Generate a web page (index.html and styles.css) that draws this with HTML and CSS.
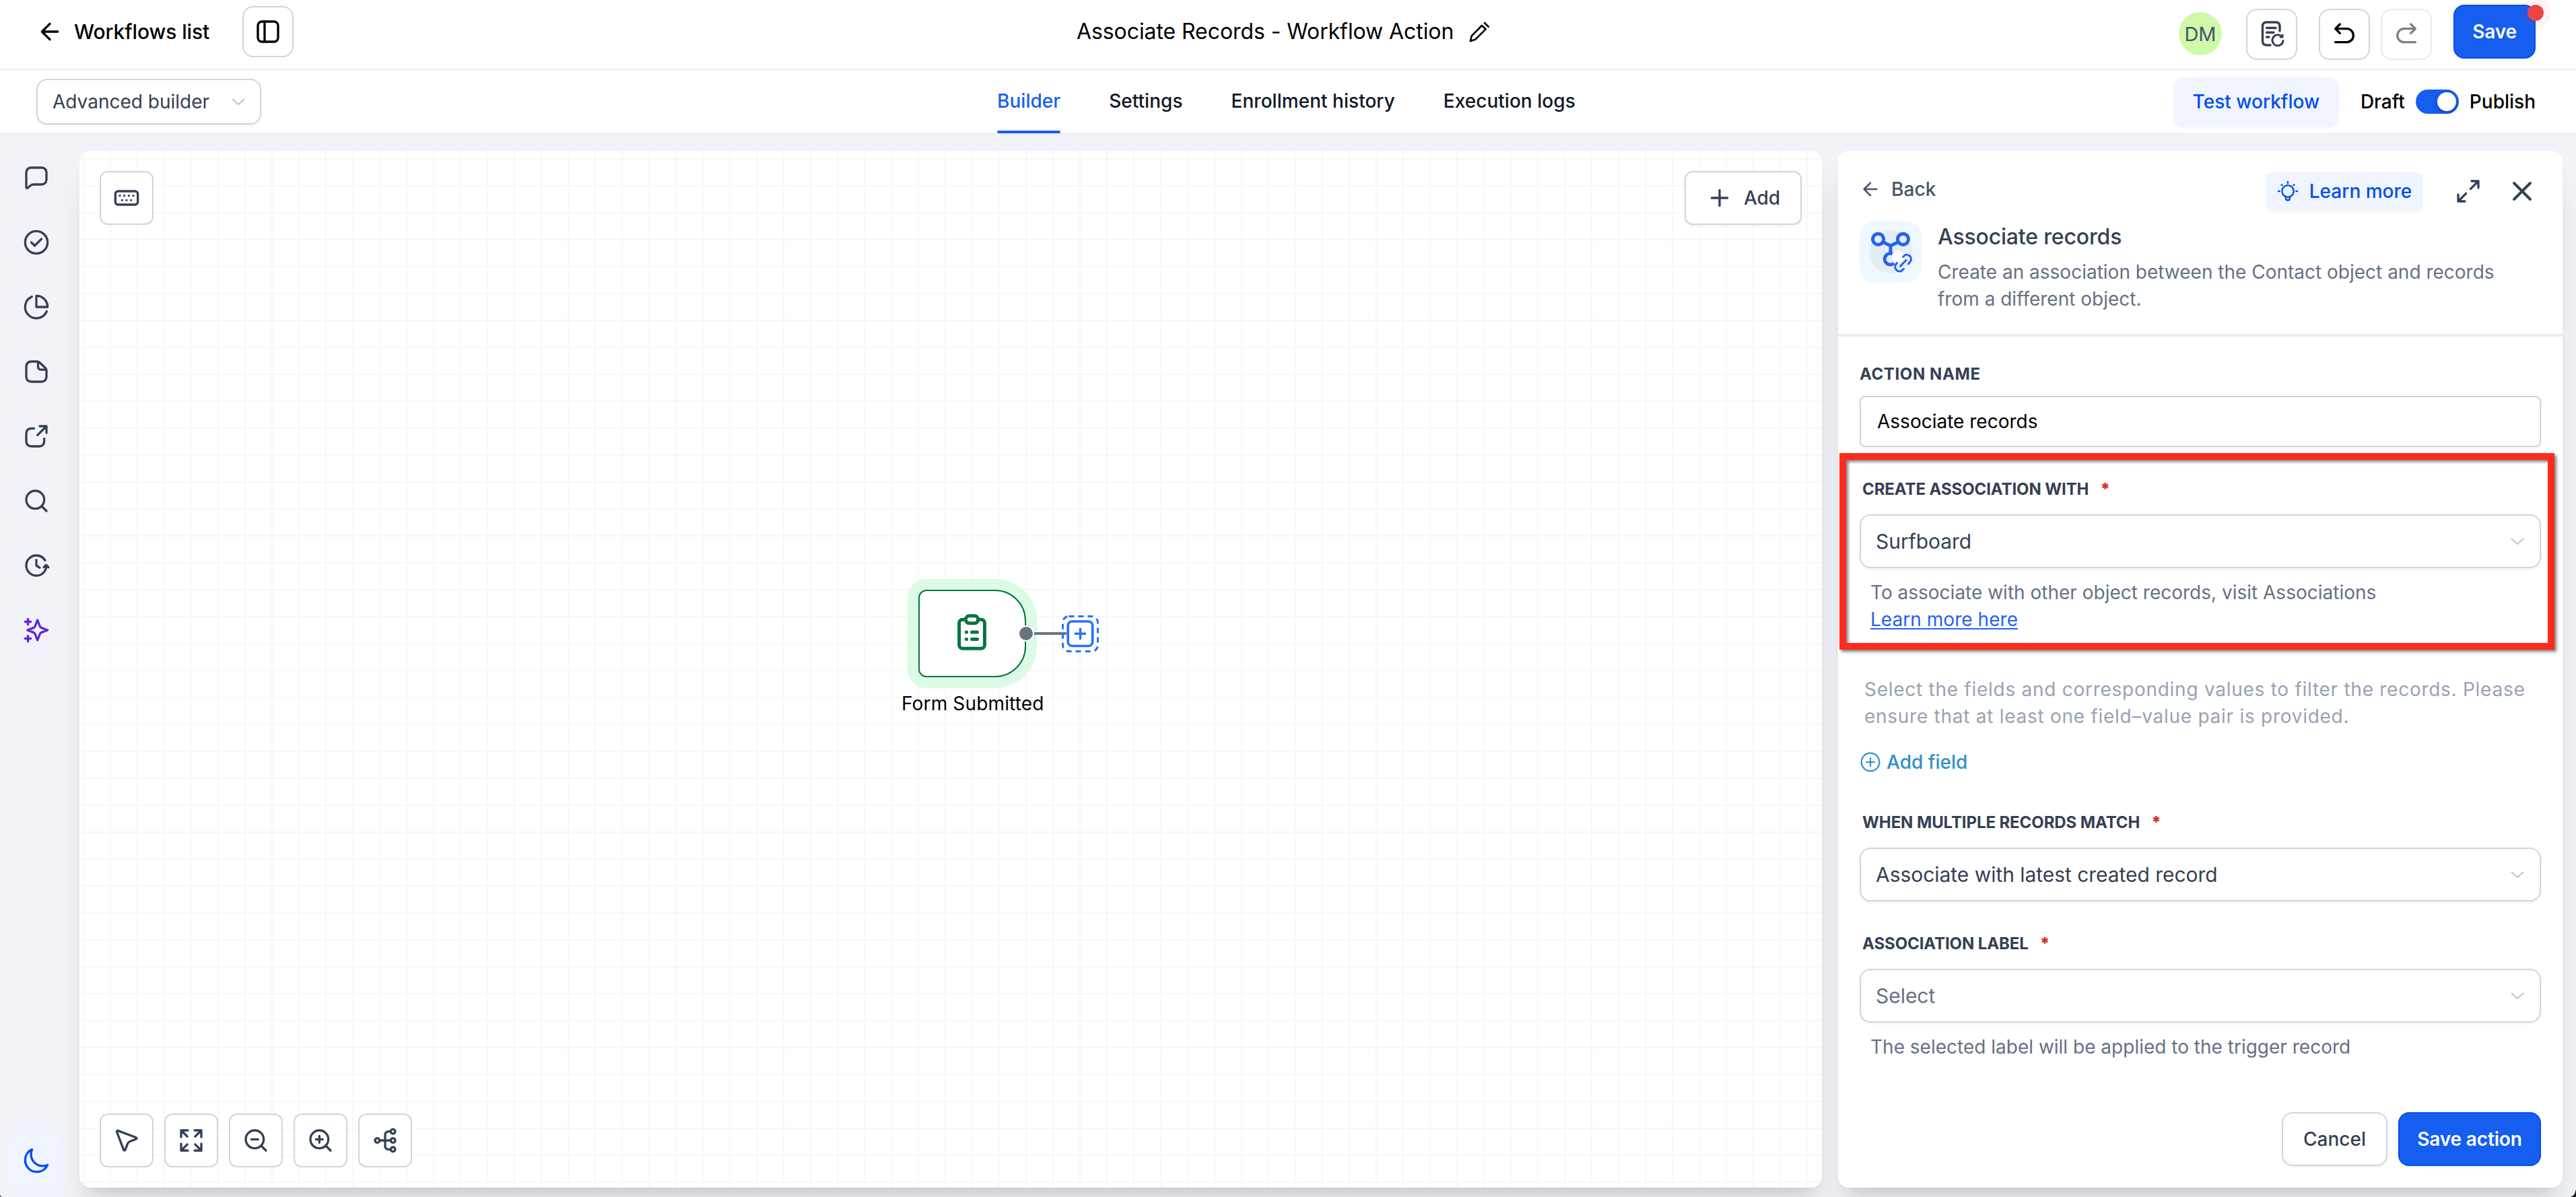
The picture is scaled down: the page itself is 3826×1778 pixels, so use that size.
FILE: index.html
```html
<!DOCTYPE html>
<html lang="en">
<head>
<meta charset="utf-8">
<title>Associate Records - Workflow Action</title>
<link rel="stylesheet" href="styles.css">
</head>
<body>
<div class="app">
  <header class="topbar">
    <div class="topbar-left">
      <svg class="icon i40" viewBox="0 0 24 24"><path d="M19 12H5M12 19L5 12L12 5"/></svg>
      <span class="crumb">Workflows list</span>
      <button class="sq-btn"><svg class="icon i40" viewBox="0 0 24 24"><rect x="3" y="3" width="18" height="18" rx="3.6"/><path d="M9 3V21"/></svg></button>
    </div>
    <div class="topbar-title">
      <h1>Associate Records - Workflow Action</h1>
      <svg class="icon i32 pencil" viewBox="0 0 24 24"><path d="M18 1.500L22.400 5.900M2.200 21.800L3.500 16L14.900 4.500L19.200 8.500L7.800 19.900Z"/></svg>
    </div>
    <div class="topbar-right">
      <div class="avatar">DM</div>
      <button class="sq-btn history"><svg class="icon" width="42" height="42" viewBox="0 0 42 42"><g stroke-width="3.4"><path d="M33 16V9C33 5 31 3 27 3H13.500C9.500 3 7.500 5 7.500 9V31C7.500 35 9.500 37 13.500 37H19"/><path d="M13.500 11.500H27M13.500 18.300H24M13.500 25H17"/><path d="M36 24.500A8 8 0 1 0 38 30.500" stroke-width="3"/><path d="M37.500 21.500V25.500H33.500Z" stroke-width="2" fill="currentColor"/></g></svg></button>
      <button class="sq-btn undo"><svg class="icon i40" viewBox="0 0 24 24"><path d="M4 7H14C17.314 7 20 9.686 20 13C20 16.314 17.314 19 14 19H4M4 7L8 3M4 7L8 11"/></svg></button>
      <button class="sq-btn redo"><svg class="icon i40" viewBox="0 0 24 24"><path d="M20 7H10C6.686 7 4 9.686 4 13C4 16.314 6.686 19 10 19H20M20 7L16 3M20 7L16 11"/></svg></button>
      <button class="primary save">Save<i class="dot"></i></button>
    </div>
  </header>

  <nav class="subbar">
    <div class="mode-select"><span>Advanced builder</span><svg class="chev" viewBox="0 0 20 10"><path d="M1 1L10 9.200L19 1"/></svg></div>
    <div class="tabs">
      <a class="tab active">Builder</a><a class="tab">Settings</a><a class="tab">Enrollment history</a><a class="tab">Execution logs</a>
    </div>
    <div class="subbar-right">
      <button class="test">Test workflow</button>
      <span>Draft</span><i class="switch"></i><span>Publish</span>
    </div>
  </nav>

  <main class="workspace">
    <aside class="rail">
      <svg class="icon i40" viewBox="0 0 24 24"><path d="M3 7.800C3 4.500 4.500 3 7.800 3H16.200C19.500 3 21 4.500 21 7.800V13.200C21 16.500 19.500 18 16.200 18H9.684C8.400 18 7.800 18.200 6.685 19.052L4.300 20.960C3.500 21.600 3 21.600 3 20.336Z"/></svg>
      <svg class="icon i40" viewBox="0 0 24 24"><circle cx="12" cy="12" r="10"/><path d="M7.500 12L10.500 15L16.500 9"/></svg>
      <svg class="icon i40" viewBox="0 0 24 24"><path d="M21.210 15.890A10 10 0 1 1 8 2.830M22 12A10 10 0 0 0 12 2V12Z"/></svg>
      <svg class="icon i40" viewBox="0 0 24 24"><path d="M21 11.200V16.200C21 19.500 19.500 21 16.200 21H7.800C4.500 21 3 19.500 3 16.200V7.800C3 4.500 4.500 3 7.800 3H12.600C13.600 3 14.100 3.200 14.800 3.800L20 8.700C20.800 9.500 21 10 21 11.200ZM13.500 3.500V7.400C13.500 9.300 14.500 10.300 16.400 10.300H20.500"/></svg>
      <svg class="icon i40" viewBox="0 0 24 24"><path d="M21 9V3M21 3H15M21 3L13 11M10 5H7.800C4.500 5 3 6.500 3 9.800V16.200C3 19.500 4.500 21 7.800 21H14.200C17.500 21 19 19.500 19 16.200V14"/></svg>
      <svg class="icon i40" viewBox="0 0 24 24"><circle cx="11" cy="11" r="8"/><path d="M21 21L16.650 16.650"/></svg>
      <svg class="icon i40" viewBox="0 0 24 24"><path d="M22.700 13.500L20.700 11.500L18.700 13.500M21 12C21 16.971 16.971 21 12 21C7.029 21 3 16.971 3 12C3 7.029 7.029 3 12 3C15.302 3 18.189 4.778 19.755 7.429M12 7V12L15 14"/></svg>
      <svg class="icon i40 violet" viewBox="0 0 24 24"><path d="M4.500 22V17M4.500 7V2M2 4.500H7M2 19.500H7M13 3L11.266 7.509C10.984 8.242 10.843 8.609 10.624 8.917C10.429 9.190 10.190 9.429 9.917 9.624C9.609 9.843 9.242 9.984 8.509 10.266L4 12L8.509 13.734C9.242 14.016 9.609 14.157 9.917 14.377C10.190 14.571 10.429 14.810 10.624 15.083C10.843 15.391 10.984 15.758 11.266 16.491L13 21L14.734 16.491C15.016 15.758 15.157 15.391 15.377 15.083C15.571 14.810 15.810 14.571 16.083 14.377C16.391 14.157 16.758 14.016 17.491 13.734L22 12L17.491 10.266C16.758 9.984 16.391 9.843 16.083 9.624C15.810 9.429 15.571 9.190 15.377 8.917C15.157 8.609 15.016 8.242 14.734 7.509L13 3Z"/></svg>
      <button class="theme"><svg class="icon i40" viewBox="0 0 24 24"><path d="M22 15.844C20.687 16.438 19.229 16.769 17.694 16.769C11.915 16.769 7.231 12.085 7.231 6.307C7.231 4.771 7.562 3.313 8.156 2C4.526 3.642 2 7.295 2 11.538C2 17.316 6.684 22 12.462 22C16.705 22 20.358 19.474 22 15.844Z"/></svg></button>
    </aside>

    <section class="canvas">
      <div class="canvas-row">
        <button class="tool"><svg class="icon i40" viewBox="0 0 24 24"><rect x="2" y="6" width="20" height="12" rx="2.400"/><path d="M6 10H6.010M10 10H10.010M14 10H14.010M18 10H18.010M8 14H8.010M12 14H12.010M16 14H16.010"/></svg></button>
        <button class="tool add"><svg class="icon i40" viewBox="0 0 24 24"><path d="M12 5V19M5 12H19"/></svg><span>Add</span></button>
      </div>
      <div class="canvas-row tools">
        <button class="tool"><svg class="icon i40" viewBox="0 0 24 24"><path d="M3.400 4.600C3.100 3.600 3.600 3.100 4.600 3.400L20.200 9.300C21.300 9.700 21.300 10.500 20.200 10.900L14.900 12.900C13.900 13.300 13.300 13.900 12.900 14.900L10.900 20.200C10.500 21.300 9.700 21.300 9.300 20.200Z"/></svg></button>
        <button class="tool"><svg class="icon i40" viewBox="0 0 24 24"><path d="M15.500 8.500L21 3M21 3H15M21 3V9M8.500 8.500L3 3M3 3V9M3 3H9M8.500 15.500L3 21M3 21H9M3 21V15M15.500 15.500L21 21M21 21V15M21 21H15"/></svg></button>
        <button class="tool"><svg class="icon i40" viewBox="0 0 24 24"><circle cx="11" cy="11" r="8"/><path d="M21 21L16.650 16.650M8 11H14"/></svg></button>
        <button class="tool"><svg class="icon i40" viewBox="0 0 24 24"><circle cx="11" cy="11" r="8"/><path d="M21 21L16.650 16.650M11 8V14M8 11H14"/></svg></button>
        <button class="tool"><svg class="icon i40" viewBox="0 0 24 24"><circle cx="5" cy="12" r="2"/><circle cx="19" cy="4" r="2"/><circle cx="19" cy="12" r="2"/><circle cx="19" cy="20" r="2"/><path d="M7 12H17M17 4H15.200C13 4 12 5 12 7.200V16.800C12 19 13 20 15.200 20H17"/></svg></button>
      </div>

      <svg class="edge" width="60" height="4" viewBox="0 0 60 4"><path d="M0 2H60"/></svg>
      <div class="node">
        <svg width="44" height="54" viewBox="0 0 44 54"><rect x="2.600" y="8.300" width="37.800" height="43" rx="5"/><path d="M17.500 2.800H25.500A4.700 5 0 0 1 25.500 13.800H17.500A4.700 5 0 0 1 17.500 2.800Z" fill="#fff"/><path d="M13.300 27H13.500M13.300 37.400H13.500M21.500 27H29.500M21.500 37.400H29.500"/></svg>
      </div>
      <i class="port"></i>
      <div class="node-label">Form Submitted</div>
      <svg class="add-step" width="56" height="56" viewBox="0 0 56 56"><rect x="1.500" y="1.500" width="52" height="52" rx="9" stroke-width="3" stroke-dasharray="8 6"/><rect x="9.200" y="9" width="36.500" height="36.500" rx="6" stroke-width="3.600" fill="#fff"/><path d="M27.500 19V36M19 27.300H36" stroke-width="3.400"/></svg>
    </section>

    <section class="panel">
      <div class="panel-head">
        <div class="panel-nav">
          <div class="back"><svg class="icon i32" viewBox="0 0 24 24"><path d="M19 12H5M12 19L5 12L12 5"/></svg><span>Back</span></div>
          <div class="panel-actions">
            <button class="learn"><svg class="icon i32" viewBox="0 0 24 24"><path d="M9.800 17.700V20C9.800 21.200 10.600 22 12 22C13.400 22 14.200 21.200 14.200 20V17.700M12 1.500V3M2.800 12H1.500M22.500 12H21.200M19 4.800L18.300 5.500M5 4.800L5.700 5.500M18.500 12A6.500 6.500 0 1 0 9.800 18.100C10.800 18.500 13.200 18.500 14.200 18.100A6.500 6.500 0 0 0 18.500 12Z"/></svg><span>Learn more</span></button>
            <svg class="icon i40 expand" viewBox="0 0 24 24"><path d="M14 10L21 3M21 3H15M21 3V9M10 14L3 21M3 21H9M3 21V15"/></svg>
            <svg class="icon i48" viewBox="0 0 24 24"><path d="M18 6L6 18M6 6L18 18"/></svg>
          </div>
        </div>
        <div class="panel-info">
          <svg class="tile" width="92" height="92" viewBox="0 0 92 92"><circle cx="46" cy="46" r="32" fill="#e4ecf4"/><g fill="none" stroke="#2563eb" stroke-width="5"><circle cx="27.600" cy="27.300" r="8.100"/><circle cx="64.500" cy="27.300" r="8.100"/><path d="M34.500 31.500L46 37L57.500 31.500M46 37V50"/><path d="M49 49.300A8.300 8.300 0 1 0 51 63"/></g><circle cx="57" cy="53.500" r="9.500" fill="#fff"/><g fill="none" stroke="#2563eb" stroke-width="3" stroke-linecap="round"><path d="M64.500 53.500L66 52C71.500 47 80 54.500 75 61L72.500 64"/><path d="M55.500 62.500L54 64.500C49.500 70.500 57.500 78.500 63.500 73.500L65.500 71.500"/><path d="M60.500 67.500L69 58.500"/></g></svg>
          <div>
            <h2>Associate records</h2>
            <p>Create an association between the Contact object and records<br>from a different object.</p>
          </div>
        </div>
      </div>

      <div class="form">
        <label class="label name-label">ACTION NAME</label>
        <div class="input">Associate records</div>

        <label class="label req">CREATE ASSOCIATION WITH<b>*</b></label>
        <div class="select"><span>Surfboard</span><svg class="chev" viewBox="0 0 20 10"><path d="M1 1L10 9.200L19 1"/></svg></div>
        <p class="hint">To associate with other object records, visit Associations<br><a>Learn more here</a></p>

        <p class="note">Select the fields and corresponding values to filter the records. Please<br>ensure that at least one field–value pair is provided.</p>
        <a class="add-field"><svg class="icon i32" viewBox="0 0 24 24"><circle cx="12" cy="12" r="10"/><path d="M12 7.500V16.500M7.500 12H16.500"/></svg><span>Add field</span></a>

        <label class="label req match">WHEN MULTIPLE RECORDS MATCH<b>*</b></label>
        <div class="select"><span>Associate with latest created record</span><svg class="chev" viewBox="0 0 20 10"><path d="M1 1L10 9.200L19 1"/></svg></div>

        <label class="label req">ASSOCIATION LABEL<b>*</b></label>
        <div class="select empty"><span>Select</span><svg class="chev" viewBox="0 0 20 10"><path d="M1 1L10 9.200L19 1"/></svg></div>
        <p class="hint">The selected label will be applied to the trigger record</p>
      </div>

      <div class="panel-foot">
        <button class="cancel">Cancel</button>
        <button class="primary submit">Save action</button>
      </div>
      <div class="highlight"></div>
    </section>
  </main>
  <i class="corner left"></i><i class="corner right"></i>
</div>
</body>
</html>
```
FILE: styles.css
```css
* { box-sizing: border-box; margin: 0; padding: 0; }
body { font-family: Inter, "Liberation Sans", sans-serif; font-size: 28px; background: #f2f3f8; color: #344054; }
button { font: inherit; color: inherit; background: #fff; border: 0; display: flex; align-items: center; justify-content: center; flex: none; }
i { display: block; flex: none; }
svg { display: block; flex: none; }

.app { position: relative; width: 3826px; height: 1778px; display: flex; flex-direction: column; overflow: hidden; }
.icon { fill: none; stroke: currentColor; stroke-width: 2; stroke-linecap: round; stroke-linejoin: round; overflow: visible; }
.i32 { width: 32px; height: 32px; }
.i40 { width: 40px; height: 40px; }
.i48 { width: 48px; height: 48px; }

/* Top bar */
.topbar { height: 104px; flex: none; display: flex; background: #fff; border-bottom: 2px solid #eaecf0; color: #000; }
.topbar-left { width: 1599px; height: 94px; padding-left: 54px; display: flex; align-items: center; }
.crumb { width: 250px; margin-left: 16px; font-size: 30px; font-weight: 500; letter-spacing: -0.1px; }
.sq-btn { width: 76px; height: 76px; border: 2px solid #d0d5dd; border-radius: 16px; }
.topbar-title { height: 93px; display: flex; align-items: center; }
.topbar-title h1 { width: 582px; font-size: 32px; font-weight: 400; letter-spacing: -0.08px; white-space: nowrap; }
.pencil { margin-top: 2px; }
.topbar-right { height: 102px; margin-left: auto; padding-right: 60px; display: flex; align-items: center; }
.avatar { width: 64px; height: 64px; margin: 0 36px 2px 0; border-radius: 50%; background: #d0f8ab; color: #475467; font-size: 29px; display: flex; align-items: center; justify-content: center; }
.history { color: #344054; margin-right: 32px; }
.undo { margin-right: 16px; }
.redo { margin-right: 32px; border-color: #e7eaee; color: #808080; }
.primary { height: 80px; border: 2px solid #004eeb; border-radius: 16px; background: #155eef; color: #fff; font-weight: 600; letter-spacing: -0.15px; box-shadow: 0 2px 4px rgba(16, 24, 40, .05); }
.save { position: relative; width: 122px; margin-bottom: 8px; }
.submit { width: 212px; }
.dot { position: absolute; top: -2px; right: -14px; width: 24px; height: 24px; border-radius: 50%; background: #f04444; box-shadow: 0 0 0 11px rgba(240, 68, 68, .06); }

/* Tab bar */
.subbar { height: 96px; flex: none; display: flex; background: #fff; border-bottom: 2px solid #eaecf0; color: #101828; font-weight: 500; }
.mode-select { width: 334px; height: 68px; margin: 13px 1093px 0 54px; padding: 0 22px; border: 2px solid #d0d5dd; border-radius: 16px; display: flex; align-items: center; justify-content: space-between; font-weight: 400; color: #344054; box-shadow: 0 2px 4px rgba(16, 24, 40, .06); }
.chev { width: 20px; height: 10px; fill: none; stroke: #c2c2c2; stroke-width: 2; }
.tabs { display: flex; gap: 72px; letter-spacing: .03px; }
.tab { height: 94px; line-height: 92px; white-space: nowrap; border-bottom: 4px solid transparent; }
.tab.active { position: relative; color: #155eef; }
.tab.active::after { content: ""; position: absolute; left: 0; right: 0; bottom: -4px; height: 4px; border-radius: 2px; background: #155eef; }
.subbar-right { height: 94px; margin-left: auto; padding-right: 60px; display: flex; align-items: center; color: #000; }
.test { width: 246px; height: 73px; margin-right: 32px; border-radius: 16px; background: #eff4ff; color: #004eeb; font-weight: 500; box-shadow: 0 2px 4px rgba(16, 24, 40, .05); }
.switch { width: 64px; height: 36px; margin: 0 16px 0 16px; padding: 4px; border-radius: 18px; background: #155eef; }
.switch::after { content: ""; display: block; width: 28px; height: 28px; margin-left: 28px; border-radius: 50%; background: #fff; box-shadow: 0 2px 6px rgba(0, 0, 0, .3); }

/* Workspace */
.workspace { flex: 1; display: flex; padding: 24px 20px 14px 0; }
.rail { width: 108px; margin-right: 10px; padding-top: 20px; display: flex; flex-direction: column; align-items: center; gap: 56px; }
.violet { color: #5d28dc; }
.theme { width: 80px; height: 80px; margin: auto 0 0; border-radius: 14px; background: #eff4ff; color: #004eeb; }

.canvas { position: relative; width: 2588px; padding: 30px; display: flex; flex-direction: column; justify-content: space-between; border-radius: 16px; background-color: #fff; background-image: linear-gradient(90deg, #f7f7f7 2px, transparent 2px), linear-gradient(#f7f7f7 2px, transparent 2px); background-size: 40px 40px; background-position: 5px 11px; box-shadow: 0 40px 50px -10px rgba(0, 0, 0, .1), 0 16px 20px -12px rgba(0, 0, 0, .1); }
.canvas-row { display: flex; justify-content: space-between; }
.tools { justify-content: flex-start; gap: 16px; }
.tool { width: 80px; height: 80px; border: 2px solid #d0d5dd; border-radius: 12px; }
.add { width: 174px; gap: 16px; font-weight: 500; box-shadow: 0 2px 4px rgba(16, 24, 40, .05); }
.node { position: absolute; left: 1246px; top: 652px; width: 160px; height: 130px; border: 2px solid #087443; border-radius: 12px 46px 46px 12px; background: #fff; box-shadow: 0 0 0 16px #dcfae6; display: flex; align-items: center; justify-content: center; padding-bottom: 4px; }
.node svg { fill: none; stroke: #087443; stroke-width: 5; stroke-linecap: round; }
.edge { position: absolute; z-index: 1; left: 1406px; top: 715px; stroke: #6b7280; stroke-width: 4; }
.port { position: absolute; z-index: 2; left: 1394px; top: 705px; width: 24px; height: 24px; border: 2px solid #fff; border-radius: 50%; background: #6b7280; }
.node-label { position: absolute; left: 1221px; top: 801px; line-height: 40px; color: #000; letter-spacing: .15px; white-space: nowrap; }
.add-step { position: absolute; z-index: 1; left: 1458.500px; top: 689.500px; fill: none; stroke: #2970ff; stroke-linecap: butt; }

/* Side panel */
.panel { position: relative; width: 1076px; margin-left: 24px; display: flex; flex-direction: column; border-radius: 16px; background: #fff; box-shadow: 0 40px 50px -10px rgba(0, 0, 0, .1), 0 16px 20px -12px rgba(0, 0, 0, .1); }
.panel-head { height: 276px; flex: none; padding: 32px 32px 0; border-bottom: 4px solid #eaecf0; }
.panel-nav { height: 56px; display: flex; justify-content: space-between; }
.back { height: 49px; display: flex; align-items: center; gap: 15px; color: #475467; font-weight: 500; letter-spacing: .1px; }
.panel-actions { display: flex; align-items: center; }
.learn { width: 232px; height: 56px; gap: 16px; border-radius: 8px; background: #eff4ff; color: #004eeb; font-weight: 500; box-shadow: 0 2px 4px rgba(16, 24, 40, .05); }
.learn .icon { stroke-width: 1.800; }
.expand { margin: 0 36px 0 48px; }
.panel-actions .i48 { margin-right: 4px; }
.panel-info { margin-top: 16px; display: flex; gap: 24px; }
.tile { border-radius: 24px; background: #eff8ff; }
.panel-info h2 { margin-top: 4px; font-size: 32px; line-height: 40px; font-weight: 500; letter-spacing: -0.17px; }
.panel-info p { margin-top: 12px; line-height: 40px; color: #667085; white-space: nowrap; }

.form { flex: 1; padding: 39px 32px 0; }
.label { display: flex; align-items: center; height: 32px; font-size: 24px; font-weight: 700; letter-spacing: -0.1px; white-space: nowrap; }
.name-label { letter-spacing: .6px; }
.input { height: 76px; margin-top: 17px; padding-left: 24px; border: 2px solid #d0d5dd; border-radius: 8px; line-height: 73px; color: #000; box-shadow: 0 2px 4px rgba(16, 24, 40, .05); }
.req { margin-top: 46px; padding-left: 4px; }
.req b { margin-left: 17px; color: #d92d20; }
.match { margin-top: 53px; }
.select { height: 80px; margin-top: 22px; padding: 0 23px 0 22px; border: 2px solid #d0d5dd; border-radius: 16px; display: flex; align-items: center; justify-content: space-between; font-size: 30px; letter-spacing: -0.04px; box-shadow: 0 2px 4px rgba(16, 24, 40, .05); }
.empty { color: #667085; }
.hint { margin: 16px 0 0 16px; line-height: 40px; color: #667085; white-space: nowrap; }
.hint a { color: #2563eb; letter-spacing: .04px; text-decoration: underline; text-decoration-thickness: 2px; text-underline-offset: 3px; }
.note { margin: 64px 0 0 7px; line-height: 40px; letter-spacing: .73px; color: #98a2b3; white-space: nowrap; }
.add-field { width: fit-content; height: 40px; margin-top: 28px; display: flex; align-items: center; gap: 8px; color: #2e90c8; font-weight: 500; }
.add-field .icon { stroke-width: 1.600; }
.panel-foot { padding: 0 32px 32px; display: flex; justify-content: flex-end; gap: 16px; }
.cancel { width: 157px; height: 80px; border: 2px solid #d0d5dd; border-radius: 16px; font-weight: 500; box-shadow: 0 2px 4px rgba(16, 24, 40, .05); }
.highlight { position: absolute; left: 2px; top: 449px; width: 1062px; height: 292px; border: 10px solid #ff2b1c; filter: drop-shadow(3px 3px 2px rgba(0, 0, 0, .5)); }

/* Rounded window corners */
.corner { position: absolute; bottom: 0; }
.corner.left { left: 0; width: 4px; height: 5px; background: radial-gradient(ellipse 4px 5px at 100% 0, transparent 96%, #2f6f6a); }
.corner.right { right: 0; width: 9px; height: 13px; background: radial-gradient(ellipse 9px 13px at 0 0, transparent 96%, #10201f); }
```
